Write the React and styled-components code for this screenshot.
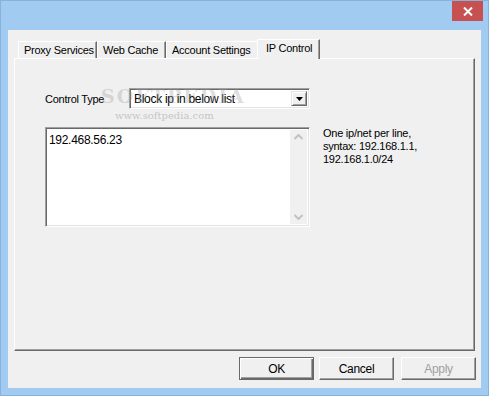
import styled, { createGlobalStyle } from "styled-components";

const Global = createGlobalStyle`
  body {
    margin: 0;
    background: #a1cbf1;
    font-family: "Liberation Sans", Arial, sans-serif;
    font-size: 11px;
    letter-spacing: -0.25px;
    color: #000;
  }
`

const Window = styled.div`
  width: 489px;
  height: 396px;
  box-sizing: border-box;
  background: #a1cbf1;
  border: 1px solid #86b2dc;
  display: flex;
  flex-direction: column;
  position: relative;
`

const TitleBar = styled.div`
  height: 29px;
  display: flex;
  justify-content: flex-end;
  align-items: flex-start;
  padding-right: 5px;
`

const CloseButton = styled.div`
  width: 31px;
  height: 20px;
  background: #c75050;
  display: flex;
  align-items: center;
  justify-content: center;
`

const Client = styled.div`
  margin: 0 7px 7px 7px;
  flex: 1;
  background: #f0f0f0;
  display: flex;
  flex-direction: column;
  padding: 9px 6px 8px 6px;
  box-sizing: border-box;
`

const TabStrip = styled.div`
  display: flex;
  align-items: flex-end;
  padding-left: 4px;
  height: 20px;
  position: relative;
  z-index: 1;
  margin-bottom: -1px;
`

const Tab = styled.div`
  box-sizing: border-box;
  height: ${p => (p.$active ? "20px" : "17px")};
  margin-bottom: ${p => (p.$active ? "0" : "1px")};
  margin-left: ${p => (p.$active ? "-2px" : "0")};
  padding: ${p => (p.$active ? "0 8px 0 8px" : "0 5px")};
  width: ${p => p.$w}px;
  background: #f0f0f0;
  border-top: 1px solid #fff;
  border-left: 1px solid #fff;
  border-right: 1px solid #696969;
  box-shadow: inset -1px 0 #a0a0a0;
  display: flex;
  align-items: ${p => (p.$active ? "flex-start" : "center")};
  padding-top: ${p => (p.$active ? "2px" : "0")};
  white-space: nowrap;
`

const Panel = styled.div`
  height: 293px;
  box-sizing: border-box;
  background: #f0f0f0;
  border-top: 1px solid #fff;
  border-left: 1px solid #fff;
  border-right: 1px solid #696969;
  border-bottom: 1px solid #696969;
  box-shadow: inset -1px -1px #a0a0a0;
  padding: 29px 0 0 30px;
  display: flex;
  flex-direction: column;
  position: relative;
`

const Row = styled.div`
  display: flex;
  align-items: ${p => p.$align || "center"};
  margin-top: ${p => p.$top || 0}px;
`

const Label = styled.div`
  width: 84px;
`

const sunken = `
  box-sizing: border-box;
  background: #fff;
  border-style: solid;
  border-width: 1px;
  border-color: #a0a0a0 #fff #fff #a0a0a0;
  box-shadow: inset 1px 1px #696969, inset -1px -1px #e3e3e3;
`

const Select = styled.div`
  ${sunken}
  width: 181px;
  height: 21px;
  display: flex;
  align-items: center;
  padding: 2px 2px 2px 4px;
`

const SelectValue = styled.div`
  flex: 1;
  font-size: 12px;
  letter-spacing: -0.3px;
`

const DropButton = styled.div`
  width: 16px;
  height: 15px;
  box-sizing: border-box;
  background: #f0f0f0;
  border-style: solid;
  border-width: 1px;
  border-color: #e3e3e3 #696969 #696969 #e3e3e3;
  box-shadow: inset 1px 1px #fff, inset -1px -1px #a0a0a0;
  display: flex;
  align-items: center;
  justify-content: center;
`

const TextArea = styled.div`
  ${sunken}
  width: 265px;
  height: 100px;
  display: flex;
  padding: 2px;
`

const TextContent = styled.div`
  flex: 1;
  padding: 3px 0 0 1px;
  font-size: 12px;
  letter-spacing: -0.3px;
`

const ScrollBar = styled.div`
  width: 17px;
  background: #f0f0f0;
  display: flex;
  flex-direction: column;
  justify-content: space-between;
  align-items: center;
  padding: 4px 0 4px;
`

const Hint = styled.div`
  margin-left: 13px;
  line-height: 13px;
  margin-top: 0px;
`

const Footer = styled.div`
  display: flex;
  justify-content: flex-end;
  gap: 5px;
  margin-top: 6px;
  padding-right: 0;
  margin-right: -1px;
`

const Button = styled.div`
  box-sizing: border-box;
  width: 75px;
  height: 23px;
  display: flex;
  align-items: center;
  justify-content: center;
  font-size: 12px;
  letter-spacing: -0.3px;
  background: #f0f0f0;
  color: ${p => (p.$disabled ? "#a0a0a0" : "#000")};
  border-style: solid;
  border-width: 1px;
  border-color: ${p => (p.$default ? "#696969" : "#fff #696969 #696969 #fff")};
  box-shadow: ${p =>
    p.$default
      ? "inset 1px 1px #fff, inset -1px -1px #696969, inset -2px -2px #a0a0a0"
      : "inset -1px -1px #a0a0a0"};
  margin-left: ${p => p.$gap || 0}px;
`

const Watermark = styled.div`
  position: absolute;
  left: 86px;
  top: 26px;
  pointer-events: none;
  color: rgba(160, 160, 160, 0.35);
  font-family: "DejaVu Serif", serif;
  letter-spacing: 0;
`

const WatermarkBig = styled.div`
  font-size: 19px;
  font-weight: bold;
  letter-spacing: 2px;
`

const WatermarkSmall = styled.div`
  font-size: 10px;
  margin: 3px 0 0 14px;
  color: rgba(150, 150, 150, 0.5);
`

const Chevron = ({ up }) => (
  <svg width="9" height="6" viewBox="0 0 9 6">
    <path
      d={up ? "M0.5 5 L4.5 1 L8.5 5" : "M0.5 1 L4.5 5 L8.5 1"}
      fill="none"
      stroke="#c2c2c2"
      strokeWidth="2"
    />
  </svg>
)

function App() {
  return (
    <Window>
      <Global />
      <TitleBar>
        <CloseButton>
          <svg width="10" height="9" viewBox="0 0 10 9">
            <path d="M1 0.5 L9 8.5 M9 0.5 L1 8.5" stroke="#fff" strokeWidth="2" />
          </svg>
        </CloseButton>
      </TitleBar>
      <Client>
        <TabStrip>
          <Tab $w={79}>Proxy Services</Tab>
          <Tab $w={69}>Web Cache</Tab>
          <Tab $w={93}>Account Settings</Tab>
          <Tab $w={63} $active>IP Control</Tab>
        </TabStrip>
        <Panel>
          <Row>
            <Label>Control Type</Label>
            <Select>
              <SelectValue>Block ip in below list</SelectValue>
              <DropButton>
                <svg width="7" height="4" viewBox="0 0 7 4">
                  <path d="M0 0 H7 L3.5 4 Z" fill="#000" />
                </svg>
              </DropButton>
            </Select>
          </Row>
          <Row $align="flex-start" $top={18}>
            <TextArea>
              <TextContent>192.468.56.23</TextContent>
              <ScrollBar>
                <Chevron up />
                <Chevron />
              </ScrollBar>
            </TextArea>
            <Hint>
              One ip/net per line,
              <br />
              syntax: 192.168.1.1,
              <br />
              192.168.1.0/24
            </Hint>
          </Row>
          <Watermark>
            <WatermarkBig>SOFTPEDIA</WatermarkBig>
            <WatermarkSmall>www.softpedia.com</WatermarkSmall>
          </Watermark>
        </Panel>
        <Footer>
          <Button $default>OK</Button>
          <Button>Cancel</Button>
          <Button $disabled $gap={2}>Apply</Button>
        </Footer>
      </Client>
    </Window>
  )
}

export default App;
